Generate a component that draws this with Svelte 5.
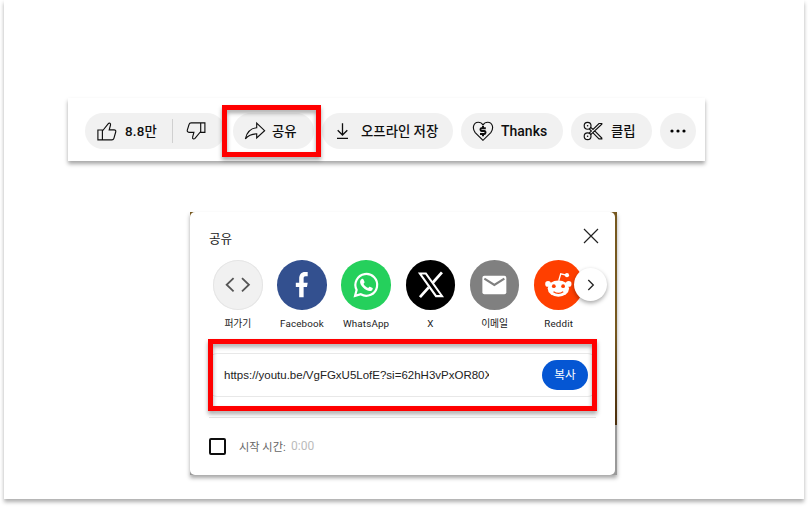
<script>
  const targets = [
    { id: 'embed', label: '퍼가기', color: '#f1f1f1' },
    { id: 'facebook', label: 'Facebook', color: '#33508f' },
    { id: 'whatsapp', label: 'WhatsApp', color: '#25d05c' },
    { id: 'x', label: 'X', color: '#000' },
    { id: 'mail', label: '이메일', color: '#808080' },
    { id: 'reddit', label: 'Reddit', color: '#ff3f00' }
  ];
</script>

<div class="canvas">
<main class="page">
  <section class="toolbar">
    <div class="pill votes">
      <button class="like">
        <svg width="20" height="20" viewBox="0 0 20 20" class="line"><path d="M.9 9H5.4V18.8H.9ZM5.4 10L11.1 2.8C12.3 1.6 14 2.4 13.5 4L12.2 8.8H17C18.4 8.8 19.1 9.8 18.7 11L16.9 17.3C16.6 18.3 16 18.8 14.9 18.8H5.4" /></svg>
        <span>8.8만</span>
      </button>
      <i class="divider"></i>
      <button class="dislike" aria-label="싫어요">
        <svg width="20" height="20" viewBox="0 0 20 20" class="line"><path d="M18.9 11.3H14.7V1.8H18.9ZM14.7 10.5L9 17.4C7.8 18.6 6.1 17.8 6.6 16.2L7.9 11.3H3C1.6 11.3 1 10.4 1.3 9.2L3.1 3.3C3.4 2.3 4 1.8 5.1 1.8H14.7" /></svg>
      </button>
    </div>
    <button class="pill share">
      <svg width="22" height="20" viewBox="0 0 22 20" class="line"><path d="M12.7 2.2L20.6 9.7L12.7 17V12.8C7.7 12.8 4.2 14.4 1.4 17.8C2.8 11.5 6.5 7.3 12.7 6.7Z" /></svg>
      <span>공유</span>
      <div class="mark mark-share"></div>
    </button>
    <button class="pill save">
      <svg width="14" height="18" viewBox="0 0 14 18" class="line"><path d="M6.5 1.2V13M1.7 8.3L6.5 13L11.3 8.3M1 16.4H12" stroke-width="1.3" /></svg>
      <span>오프라인 저장</span>
    </button>
    <button class="pill thanks">
      <svg width="22" height="22" viewBox="0 0 22 22" class="line">
        <path d="M11 20.3L3.2 12.6C-.3 8 1.7 2.2 6.2 2.2C8.3 2.2 10 3.2 11 4.9C12 3.2 13.7 2.2 15.8 2.2C20.3 2.2 22.3 8 18.8 12.6Z" />
        <path d="M13.8 8.2H9.4C8.2 8.2 8.2 11 9.5 11H12.4C13.9 11 13.8 14 12.4 14H8M11 6V8M11 14V16.2" stroke-width="2" />
      </svg>
      <span class="latin">Thanks</span>
    </button>
    <button class="pill clip">
      <svg width="20" height="20" viewBox="0 0 20 20" class="line">
        <circle cx="4.6" cy="4.8" r="3.4" /><circle cx="4.6" cy="15.2" r="3.4" />
        <circle cx="4.6" cy="4.8" r=".8" class="dot" /><circle cx="4.6" cy="15.2" r=".8" class="dot" />
        <path d="M7.7 6.3L10 8.5L16 2.5H18.8V3.2L7.7 13.7M6.2 7.8L8.4 10L6.2 12.2M11.7 9.9L18.8 17V17.8H16L10 11.8" />
      </svg>
      <span>클립</span>
    </button>
    <button class="pill more" aria-label="더보기">
      <svg width="18" height="6" viewBox="0 0 18 6"><circle cx="3" cy="3" r="1.6" /><circle cx="9" cy="3" r="1.6" /><circle cx="15" cy="3" r="1.6" /></svg>
    </button>
  </section>

  <section class="backdrop">
    <div class="dialog">
      <header>
        <h2>공유</h2>
        <svg width="16" height="16" viewBox="0 0 16 16" class="close"><path d="M1 1L15 15M15 1L1 15" /></svg>
      </header>

      <div class="targets">
        {#each targets as t}
          <div class="target">
            <div class="disc {t.id}" style="background: {t.color}">
              <svg width="49.5" height="49.5" viewBox="0 0 50 50">
                {#if t.id === 'embed'}
                  <path d="M20.8 18.3L13.8 25L20.8 31.7M29.3 18.3L36.3 25L29.3 31.7" fill="none" stroke="#555" stroke-width="1.8" />
                {:else if t.id === 'facebook'}
                  <path d="M22.4 37.5V27.2H19V22.9H22.4V19C22.4 14.5 24.6 12 28.4 12H31V16.4H28.9C27.4 16.4 26.9 17.2 26.9 18.6V22.9H31L30.3 27.2H26.9V37.5Z" fill="#fff" />
                {:else if t.id === 'whatsapp'}
                  <path d="M14.2 36.2L15.8 30.2A11 11 0 1 1 20 34.6Z" fill="none" stroke="#fff" stroke-width="2.2" />
                  <path d="M20.8 19.3C21.4 18.8 22.4 18.8 22.7 19.6L23.8 22.1C24 22.7 23.2 23.5 22.7 24C23.7 26 25.3 27.4 27.5 28.3C28.1 27.7 28.6 26.8 29.2 27.1L31.9 28.4C32.6 28.9 31.7 30.7 30.7 31.1C26.1 32.7 18.5 25.7 19.3 21.4C19.5 20.6 20 19.9 20.8 19.3Z" fill="#fff" />
                {:else if t.id === 'x'}
                  <path d="M12 12.5H20.6L38.4 37.5H29.8ZM16 14.6L30.9 35.4H34.4L19.5 14.6Z" fill="#fff" fill-rule="evenodd" />
                  <path d="M36.3 12.5L27 23M22.9 27.6L14.1 37.5" stroke="#fff" stroke-width="2.8" />
                {:else if t.id === 'mail'}
                  <rect x="12.5" y="16" width="24.2" height="18.6" rx="2" fill="#fff" />
                  <path d="M14.5 18.8L24.6 25.2L34.7 18.8" fill="none" stroke="#808080" stroke-width="2.2" />
                {:else}
                  <circle cx="14.2" cy="24.2" r="2.9" fill="#fff" /><circle cx="35" cy="24.2" r="2.9" fill="#fff" />
                  <ellipse cx="24.6" cy="28.9" rx="10.8" ry="8.2" fill="#fff" />
                  <path d="M25 21L27 14L32.5 15.2" fill="none" stroke="#fff" stroke-width="1.3" />
                  <circle cx="33.3" cy="15.3" r="2.1" fill="#fff" />
                  <circle cx="20" cy="26.5" r="1.9" fill="#ff3f00" /><circle cx="29.4" cy="26.5" r="1.9" fill="#ff3f00" />
                  <path d="M19.7 32Q24.6 35.4 29.5 32" fill="none" stroke="#ff3f00" stroke-width="1.3" />
                {/if}
              </svg>
            </div>
            <span class:hangul={t.id === 'embed' || t.id === 'mail'}>{t.label}</span>
          </div>
        {/each}
        <button class="next" aria-label="다음">
          <svg width="10" height="14" viewBox="0 0 10 14"><path d="M2.3 2L7.3 7L2.3 12" fill="none" stroke="#222" stroke-width="1.3" /></svg>
        </button>
      </div>

      <div class="link">
        <span class="url">https://youtu.be/VgFGxU5LofE?si=62hH3vPxOR80X</span>
        <button class="copy">복사</button>
        <div class="mark mark-link"></div>
      </div>

      <footer>
        <i class="check"></i>
        <span class="start">시작 시간:</span>
        <span class="time">0:00</span>
      </footer>
    </div>
  </section>
</main>
</div>

<style>
  :global(body) { background: #fff; }
  * { box-sizing: border-box; }
  button { border: 0; padding: 0; background: none; font: inherit; color: inherit; }
  svg { display: block; flex: none; }
  .canvas { width: 808px; height: 507px; overflow: hidden; padding: 0 4px; background: #fff; }
  .page {
    width: 800px; height: 499px; padding-top: 98px; background: #fff;
    box-shadow: 0 3px 4px rgba(0, 0, 0, .32);
    font-family: Roboto, "Noto Sans CJK KR", sans-serif; color: #0f0f0f;
  }
  .toolbar {
    width: 637px; height: 63px; margin-left: 64px; padding: 15px 0 0 17px;
    display: flex; gap: 8px; background: #fff; box-shadow: 0 3px 4px rgba(0, 0, 0, .35);
    font-size: 13.4px; font-weight: 500; white-space: nowrap;
  }
  .toolbar span { position: relative; top: -1px; }
  .toolbar .latin { top: 0; font-size: 14px; }
  .pill { height: 36px; border-radius: 18px; background: #f1f1f1; display: flex; align-items: center; flex: none; }
  .line { fill: none; stroke: #0f0f0f; stroke-width: 1.15; }
  .line .dot { fill: #0f0f0f; stroke: none; }
  .votes { width: 140px; }
  .like { display: flex; align-items: center; gap: 8px; width: 87px; padding-left: 12px; }
  .like span { letter-spacing: .2px; }
  .divider { width: 1px; height: 24px; background: #d0d0d0; }
  .dislike { padding-left: 13px; }
  .share { width: 81px; padding-left: 11px; gap: 6px; position: relative; }
  .save { width: 131px; padding-left: 14px; gap: 11px; }
  .thanks { width: 102px; padding-left: 11px; gap: 7px; }
  .clip { width: 81px; padding-left: 12px; gap: 8px; }
  .more { width: 36px; justify-content: center; }
  .mark { position: absolute; border: 5px solid #f00; filter: drop-shadow(0 3px 2px rgba(0, 0, 0, .35)); pointer-events: none; }
  .mark-share { left: -11px; top: -8px; width: 99px; height: 52px; }
  .mark-link { left: -2px; top: -15px; width: 389px; height: 72px; }
  .backdrop {
    width: 427px; height: 263px; margin: 51px 0 0 186px;
    background: linear-gradient(#76581f 0 45%, #4a2d0c 213px, #999 213px);
    box-shadow: 0 3px 4px rgba(0, 0, 0, .35);
  }
  .dialog { width: 425px; height: 263px; padding: 16px 19px 0; background: #fff; border-radius: 5px; }
  header { display: flex; justify-content: space-between; height: 32px; }
  h2 { margin: 0; font-size: 12.6px; font-weight: 400; line-height: 21px; color: #222; }
  .close { margin-right: -3px; fill: none; stroke: #222; stroke-width: 1.2; }
  .targets { display: flex; gap: 14.7px; margin-left: 4px; height: 93px; position: relative; }
  .target { width: 49.5px; flex: none; display: flex; flex-direction: column; align-items: center; font-size: 9.8px; line-height: 14px; white-space: nowrap; letter-spacing: .15px; color: #222; }
  .hangul { letter-spacing: -.2px; }
  .disc { width: 49.5px; height: 49.5px; border-radius: 50%; margin-bottom: 7px; flex: none; }
  .embed { box-shadow: inset 0 0 0 1px #e5e5e5; }
  .next {
    position: absolute; left: 361px; top: 8px; width: 33px; height: 33px; border-radius: 50%;
    background: #fff; display: grid; place-items: center; box-shadow: 0 2px 4px rgba(0, 0, 0, .35);
  }
  .link {
    position: relative; width: 387px; height: 44px; display: flex; align-items: center; justify-content: space-between;
    border: 1px solid #e8e8e8; border-radius: 8px; padding: 0 7px 0 14px;
  }
  .url { width: 265px; overflow: hidden; white-space: nowrap; font: 11.5px/20px "Liberation Sans", Arial, sans-serif; color: #222; }
  .copy { width: 46px; height: 30px; border-radius: 15px; background: #0556d3; color: #fff; font-size: 11.6px; padding-bottom: 2px; }
  footer {
    display: flex; align-items: center; width: 387px; height: 58px; margin-top: 20px;
    border-top: 1px solid #e5e5e5; font-size: 12px; color: #666; white-space: nowrap;
  }
  .check { width: 17px; height: 17px; border: 2px solid #0f0f0f; border-radius: 2px; margin: -1px 13px 0 0; }
  .start { width: 46px; font-size: 11.2px; margin-top: -2px; }
  .time { margin: -1px 0 0 6px; color: #bbb; }
</style>
